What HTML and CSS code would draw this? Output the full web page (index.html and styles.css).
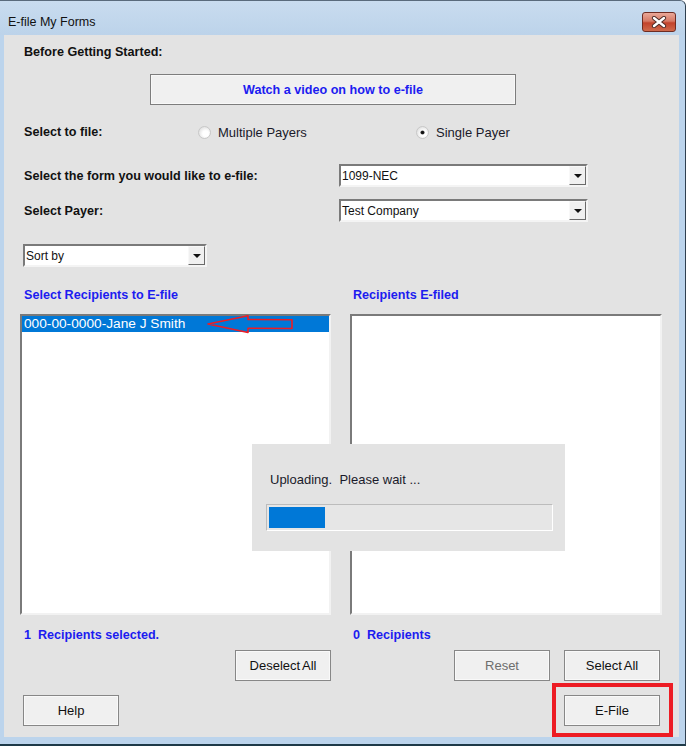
FILE: index.html
```html
<!DOCTYPE html>
<html lang="en">
<head>
    <meta charset="UTF-8" />
    <title>E-file My Forms</title>
    <link rel="stylesheet" href="styles.css">
</head>
<body>
    <div class="window">
        <div class="titlebar">
            <span class="title">E-file My Forms</span>
            <div class="close-btn">
                <svg width="16" height="12" viewBox="0 0 16 12">
                    <path d="M3 2 L13 10 M13 2 L3 10" stroke="#4a2a24" stroke-width="4.2" stroke-linecap="round" />
                    <path d="M3 2 L13 10 M13 2 L3 10" stroke="#ffffff" stroke-width="2.4" stroke-linecap="round" />
                </svg>
            </div>
        </div>

        <div class="panel">
            <div class="heading">Before Getting Started:</div>
            <button class="video-btn">Watch a video on how to e-file</button>

            <div class="file-row">
                <span class="label file-label">Select to file:</span>
                <label class="radio-opt first"><span class="radio"></span>Multiple Payers</label>
                <label class="radio-opt"><span class="radio checked"></span>Single Payer</label>
            </div>

            <div class="combo-row form-row">
                <span class="label wide-label">Select the form you would like to e-file:</span>
                <div class="combo payer-combo">
                    <span class="combo-text">1099-NEC</span>
                    <span class="combo-arrow"></span>
                </div>
            </div>

            <div class="combo-row payer-row">
                <span class="label wide-label">Select Payer:</span>
                <div class="combo payer-combo">
                    <span class="combo-text">Test Company</span>
                    <span class="combo-arrow"></span>
                </div>
            </div>

            <div class="combo sort-combo">
                <span class="combo-text">Sort by</span>
                <span class="combo-arrow"></span>
            </div>

            <div class="lists">
                <div class="col">
                    <div class="list-head">Select Recipients to E-file</div>
                    <div class="listbox">
                        <div class="list-item selected">000-00-0000-Jane J Smith</div>
                        <svg class="red-arrow" width="90" height="20" viewBox="0 0 90 20">
                            <path d="M1 9 L41 0.8 L41 4.5 L85 4.8 L85 13.5 L41 13.2 L41 17.5 Z" fill="none" stroke="#ee1c24" stroke-width="1.6" stroke-linejoin="round" />
                        </svg>
                    </div>
                    <div class="count">1&nbsp; Recipients selected.</div>
                    <div class="btn-row">
                        <button class="btn">Deselect All</button>
                    </div>
                </div>
                <div class="col right-col">
                    <div class="list-head">Recipients E-filed</div>
                    <div class="listbox"></div>
                    <div class="count">0&nbsp; Recipients</div>
                    <div class="btn-row">
                        <button class="btn disabled">Reset</button>
                        <button class="btn">Select All</button>
                    </div>
                </div>
            </div>

            <div class="footer">
                <button class="btn help-btn">Help</button>
                <div class="highlight">
                    <button class="btn">E-File</button>
                </div>
            </div>

            <div class="upload-box">
                <div class="upload-text">Uploading.  Please wait ...</div>
                <div class="progress">
                    <div class="progress-fill"></div>
                </div>
            </div>
        </div>
    </div>
</body>
</html>
```

FILE: styles.css
```css
body {
    margin: 0;
    padding: 0;
    background: #ffffff;
    font-family: "Liberation Sans", Arial, sans-serif;
}

.window {
    box-sizing: border-box;
    width: 686px;
    height: 746px;
    background: #bcd4ec;
    border-top: 1px solid #5a6b7c;
    border-right: 1px solid #2f4050;
    border-bottom: 2px solid #1e3a48;
    border-top-right-radius: 6px;
}

.titlebar {
    height: 34px;
    display: flex;
    background: linear-gradient(#c9dcef, #bcd3ea);
    border-top-right-radius: 6px;
}

.title {
    padding-left: 8px;
    line-height: 43px;
    font-size: 12.5px;
    color: #111;
}

.close-btn {
    box-sizing: border-box;
    margin: 11px 9px 0 auto;
    width: 34px;
    height: 20px;
    border: 1px solid #6e2c22;
    border-radius: 3px;
    background: linear-gradient(#eaa898 0%, #d67a66 45%, #c2432c 55%, #cf6a4c 100%);
    display: flex;
    align-items: center;
    justify-content: center;
}

.panel {
    position: relative;
    box-sizing: border-box;
    margin-left: 4px;
    width: 675px;
    height: 702px;
    padding-left: 16px;
    background: #e3e3e3;
    color: #111;
}

.label,
.heading {
    font-size: 12.6px;
    font-weight: bold;
}

.heading {
    height: 34px;
    line-height: 34px;
    padding-left: 4px;
}

.video-btn {
    display: block;
    box-sizing: border-box;
    margin: 5px 0 0 130px;
    width: 366px;
    height: 31px;
    background: #f0f0f0;
    border: 1px solid #7d7d7d;
    box-shadow: inset 0 0 0 1px #f8f8f8;
    color: #1c1cf0;
    font-family: "Liberation Sans", Arial, sans-serif;
    font-size: 12.6px;
    font-weight: bold;
    padding: 0;
}

.file-row {
    display: flex;
    align-items: center;
    height: 24px;
    margin-top: 15px;
    padding-left: 4px;
}

.file-label {
    width: 174px;
}

.radio-opt {
    display: flex;
    align-items: center;
    font-size: 13px;
    color: #1a1a2a;
}

.radio-opt.first {
    width: 218px;
}

.radio {
    box-sizing: border-box;
    width: 13px;
    height: 13px;
    margin-right: 7px;
    border-radius: 50%;
    border: 1px solid #c8c8c8;
    background: radial-gradient(circle at 60% 60%, #ffffff 30%, #e2e2e2 75%);
    position: relative;
}

.radio.checked::after {
    content: "";
    position: absolute;
    left: 4px;
    top: 4px;
    width: 3px;
    height: 3px;
    border-radius: 50%;
    background: #111;
    box-shadow: 0 0 0 0.6px #444;
}

.combo-row {
    display: flex;
    align-items: center;
    padding-left: 4px;
}

.form-row {
    margin-top: 20px;
}

.payer-row {
    margin-top: 12px;
}

.wide-label {
    width: 315px;
}

.combo {
    box-sizing: border-box;
    height: 23px;
    display: flex;
    align-items: center;
    background: #ffffff;
    border: 2px solid;
    border-color: #7a7a7a #f4f4f4 #f4f4f4 #7a7a7a;
}

.payer-combo {
    width: 249px;
}

.sort-combo {
    margin: 22px 0 0 3px;
    width: 184px;
}

.combo-text {
    flex: 1;
    padding-left: 1px;
    font-size: 12px;
    color: #111;
}

.combo-arrow {
    box-sizing: border-box;
    width: 17px;
    height: 19px;
    background: #f0f0f0;
    border: 1px solid;
    border-color: #f8f8f8 #6a6a6a #6a6a6a #f8f8f8;
    position: relative;
}

.combo-arrow::after {
    content: "";
    position: absolute;
    left: 4px;
    top: 7px;
    border-left: 4px solid transparent;
    border-right: 4px solid transparent;
    border-top: 4px solid #111;
}

.lists {
    display: grid;
    grid-template-columns: 311px 312px;
    column-gap: 19px;
    margin-top: 18px;
}

.list-head {
    height: 20px;
    line-height: 20px;
    padding-left: 4px;
    font-size: 12.6px;
    font-weight: bold;
    color: #1c1cf0;
}

.right-col .list-head,
.right-col .count {
    padding-left: 3px;
}

.listbox {
    position: relative;
    box-sizing: border-box;
    margin-top: 9px;
    height: 301px;
    background: #ffffff;
    border: 2px solid;
    border-color: #7a7a7a #f2f2f2 #f2f2f2 #7a7a7a;
}

.list-item {
    height: 16px;
    line-height: 16px;
    padding-left: 2px;
    font-size: 13.7px;
}

.list-item.selected {
    background: #0078d7;
    color: #ffffff;
}

.red-arrow {
    position: absolute;
    left: 185px;
    top: -1px;
}

.count {
    margin-top: 10px;
    height: 20px;
    line-height: 20px;
    padding-left: 4px;
    font-size: 12.6px;
    font-weight: bold;
    color: #1c1cf0;
}

.btn-row {
    display: flex;
    justify-content: flex-end;
    gap: 14px;
    margin-top: 5px;
}

.right-col .btn-row {
    margin-right: 2px;
}

.btn {
    box-sizing: border-box;
    width: 96px;
    height: 31px;
    padding: 0;
    background: #f0f0f0;
    border: 1px solid #878787;
    box-shadow: inset 0 0 0 1px #f9f9f9;
    font-family: "Liberation Sans", Arial, sans-serif;
    font-size: 13px;
    color: #111;
    word-spacing: -1px;
}

.btn.disabled {
    color: #6d6d6d;
}

.footer {
    display: flex;
    align-items: flex-start;
    margin-top: 2px;
}

.help-btn {
    margin: 12px 0 0 3px;
}

.highlight {
    margin: 0 6px 0 auto;
    padding: 8px 9px 7px 8px;
    border: 4px solid #ed1c24;
}

.upload-box {
    position: absolute;
    left: 248px;
    top: 409px;
    width: 313px;
    height: 107px;
    background: #e3e3e3;
}

.upload-text {
    margin: 27px 0 0 18px;
    height: 18px;
    line-height: 18px;
    font-size: 13px;
    color: #1a1a2a;
    white-space: pre;
}

.progress {
    box-sizing: border-box;
    margin: 15px 0 0 14px;
    width: 287px;
    height: 27px;
    padding: 2px;
    background: #e6e6e6;
    border: 1px solid;
    border-color: #bcbcbc #ffffff #ffffff #bcbcbc;
}

.progress-fill {
    width: 56px;
    height: 100%;
    background: #0078d7;
}
```
